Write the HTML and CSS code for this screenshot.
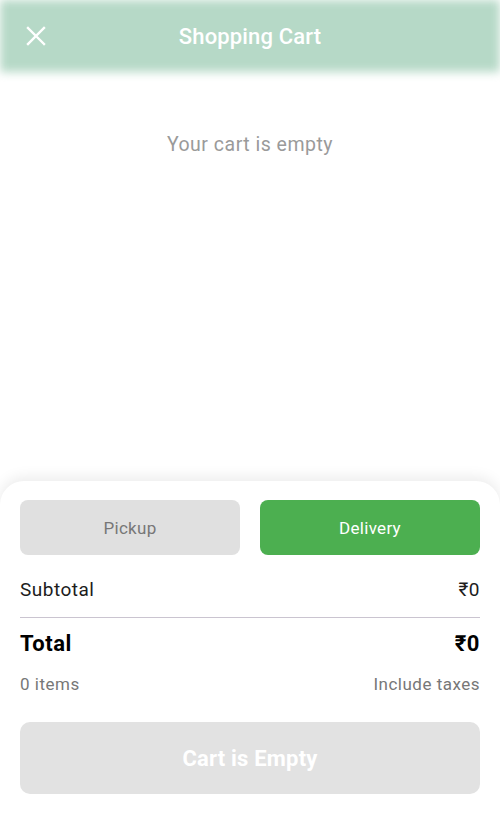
FILE: index.html
```html
<!DOCTYPE html>
<html lang="en">
<head>
<meta charset="utf-8">
<title>Shopping Cart</title>
<link rel="stylesheet" href="styles.css">
</head>
<body>
<div class="page">
  <header class="topbar">
    <button class="close" aria-label="Close">
      <svg width="20" height="20" viewBox="0 0 20 20"><path d="M2 2 L18 18 M18 2 L2 18" stroke="#fff" stroke-width="2.4" stroke-linecap="square" fill="none"/></svg>
    </button>
    <h1 class="title">Shopping Cart</h1>
    <span class="spacer"></span>
  </header>
  <main class="content">
    <p class="empty">Your cart is empty</p>
  </main>
  <section class="sheet">
    <div class="modes">
      <button class="mode">Pickup</button>
      <button class="mode active">Delivery</button>
    </div>
    <div class="row subtotal"><span>Subtotal</span><span>₹0</span></div>
    <div class="divider"></div>
    <div class="row total"><span>Total</span><span>₹0</span></div>
    <div class="row meta"><span>0 items</span><span>Include taxes</span></div>
    <button class="checkout" disabled>Cart is Empty</button>
  </section>
</div>
</body>
</html>
```
FILE: styles.css
```css
* { box-sizing: border-box; }
html, body { margin: 0; padding: 0; }
body {
  font-family: Roboto, "Noto Sans", sans-serif;
  background: #fff;
  width: 500px;
  height: 814px;
  overflow: hidden;
}
.page {
  display: flex;
  flex-direction: column;
  height: 814px;
}
.topbar {
  position: relative;
  height: 72px;
  display: flex;
  align-items: center;
  padding: 0 24px;
  flex-shrink: 0;
}
.topbar::before {
  content: "";
  position: absolute;
  inset: 0;
  background: #b6d9c7;
  filter: blur(5px);
  z-index: 0;
}
.close {
  position: relative;
  z-index: 1;
  background: none;
  border: 0;
  padding: 0;
  width: 24px;
  height: 24px;
  display: flex;
  align-items: center;
  justify-content: center;
}
.title {
  position: relative;
  z-index: 1;
  flex: 1;
  margin: 0;
  text-align: center;
  color: #fff;
  font-size: 22px;
  font-weight: 500;
  letter-spacing: 0.15px;
}
.spacer { width: 24px; }
.content {
  flex: 1;
  display: flex;
  justify-content: center;
}
.empty {
  margin: 61px 0 0;
  font-size: 19.5px;
  letter-spacing: 0.5px;
  color: #9a9a9a;
  line-height: 24px;
}
.sheet {
  flex-shrink: 0;
  height: 333px;
  background: #fff;
  border-radius: 24px 24px 0 0;
  box-shadow: 0 -4px 14px rgba(0,0,0,0.08);
  padding: 19px 20px 20px;
  display: flex;
  flex-direction: column;
}
.modes {
  display: grid;
  grid-template-columns: 1fr 1fr;
  gap: 20px;
}
.mode {
  height: 55px;
  border: 0;
  border-radius: 8px;
  background: #e0e0e0;
  color: #777;
  font-family: inherit;
  font-size: 17px;
  letter-spacing: 0.3px;
  font-weight: 400;
}
.mode.active {
  background: #4caf50;
  color: #fff;
}
.row {
  display: flex;
  justify-content: space-between;
  align-items: center;
}
.subtotal {
  margin-top: 23px;
  font-size: 19px;
  line-height: 24px;
  letter-spacing: 0.5px;
  color: #1c1c1c;
}
.divider {
  height: 1px;
  background: #cac4d0;
  margin-top: 15px;
}
.total {
  margin-top: 13px;
  font-size: 22px;
  line-height: 26px;
  font-weight: 700;
  letter-spacing: 0.5px;
  color: #000;
}
.meta {
  margin-top: 17px;
  font-size: 17px;
  line-height: 20px;
  letter-spacing: 0.5px;
  color: #777;
}
.checkout {
  margin-top: 28px;
  height: 72px;
  flex-shrink: 0;
  border: 0;
  border-radius: 10px;
  background: #e2e2e2;
  color: #fff;
  font-family: inherit;
  font-size: 22px;
  font-weight: 700;
  letter-spacing: 0.2px;
}
```
